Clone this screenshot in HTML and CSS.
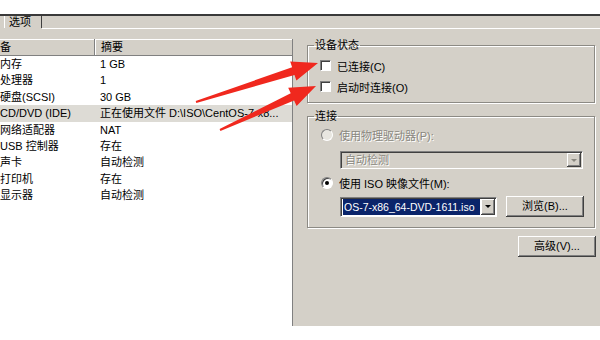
FILE: index.html
```html
<!DOCTYPE html>
<html>
  <head>
    <title>虚拟机设置 - CD/DVD</title>
    <link rel="stylesheet" href="styles.css">
  </head>
  <body>
    <div class="page">
      <div class="window">
        <div class="tabs">
          <div class="tab">选项</div>
          <div class="tab-rest"></div>
        </div>
        <div class="main">
          <div class="list">
            <div class="list-head">
              <div class="col1"><span class="shift">设备</span></div>
              <div class="col2">摘要</div>
            </div>
            <div class="row"><div class="col1">内存</div><div class="col2">1 GB</div></div>
            <div class="row"><div class="col1">处理器</div><div class="col2">1</div></div>
            <div class="row"><div class="col1">硬盘(SCSI)</div><div class="col2">30 GB</div></div>
            <div class="row selected"><div class="col1">CD/DVD (IDE)</div><div class="col2">正在使用文件 D:\ISO\CentOS-7-x8...</div></div>
            <div class="row"><div class="col1">网络适配器</div><div class="col2">NAT</div></div>
            <div class="row"><div class="col1">USB 控制器</div><div class="col2">存在</div></div>
            <div class="row"><div class="col1">声卡</div><div class="col2">自动检测</div></div>
            <div class="row"><div class="col1">打印机</div><div class="col2">存在</div></div>
            <div class="row"><div class="col1">显示器</div><div class="col2">自动检测</div></div>
          </div>

          <div class="side">
            <fieldset class="group status">
              <legend>设备状态</legend>
              <div class="opt"><span class="check"></span>已连接(C)</div>
              <div class="opt"><span class="check"></span>启动时连接(O)</div>
            </fieldset>

            <fieldset class="group connect">
              <legend>连接</legend>
              <div class="opt short disabled"><span class="radio off"></span>使用物理驱动器(P):</div>
              <div class="drop disabled-drop">
                <span class="drop-text">自动检测</span>
                <span class="drop-btn grey"></span>
              </div>
              <div class="opt short radio-two"><span class="radio on"></span>使用 ISO 映像文件(M):</div>
              <div class="file-row">
                <div class="drop combo">
                  <span class="drop-text sel">OS-7-x86_64-DVD-1611.iso</span>
                  <span class="drop-btn"></span>
                </div>
                <div class="btn browse">浏览(B)...</div>
              </div>
            </fieldset>

            <div class="btn adv">高级(V)...</div>
          </div>
        </div>
      </div>

      <svg class="arrows" width="600" height="340" viewBox="0 0 600 340">
        <polygon points="195.7,101 292.1,67.3 290.2,61.6 318,63 296.4,80.6 294.5,74.9 196.3,103" />
        <polygon points="219.6,129.1 290.7,93.2 288.2,87.7 316,86 296.6,105.9 294.1,100.4 220.4,130.9" />
      </svg>
    </div>
  </body>
</html>
```

FILE: styles.css
```css
body {
  margin: 0;
  background: #fff;
  font-family: "Liberation Sans", "Noto Sans CJK SC", sans-serif;
  font-size: 11px;
  color: #000;
}

.page { position: relative; width: 600px; height: 340px; padding-top: 14px; box-sizing: border-box; overflow: hidden; }

.window {
  height: 312px; box-sizing: border-box;
  background: #d4d0c8; border-top: 2px solid #3a3a3a;
  display: flex; flex-direction: column;
}

/* tab strip */
.tabs { display: flex; height: 13px; }
.tab {
  margin-left: 4px; width: 32px; padding-left: 4px; height: 12px; line-height: 12px;
  border-left: 1px solid #fff; border-right: 1px solid #404040;
}
.tab-rest { flex: 1; border-bottom: 1px solid #fff; }

.main { flex: 1; display: flex; padding-top: 10px; min-height: 0; }

/* device list */
.list {
  width: 292px; background: #fff; overflow: hidden;
  border-right: 1px solid #808080;
}
.list-head {
  display: flex; height: 16px; line-height: 16px;
  background: #d4d0c8; border-bottom: 1px solid #808080;
  box-shadow: inset 0 1px 0 #fff;
}
.list-head .col1 { border-right: 1px solid #808080; box-shadow: 1px 0 0 #fff; }
.shift { margin-left: -11px; }
.row { display: flex; height: 16.4px; line-height: 16.4px; }
.row.selected { background: #dddbd5; }
.col1 { width: 94px; white-space: nowrap; overflow: hidden; }
.col2 { flex: 1; padding-left: 6px; white-space: nowrap; overflow: hidden; }

/* right side */
.side { flex: 1; padding: 0 5px 0 14px; display: flex; flex-direction: column; }

.group {
  margin: 0; min-width: 0;
  padding: 4px 10px 5px 12px;
  border: 1px solid #8c8a84;
  box-shadow: inset 1px 1px 0 #fff, 1px 1px 0 #fff;
}
.group legend { margin-left: -6px; padding: 0 1px; line-height: 12px; }
.connect { margin-top: 7px; padding-bottom: 10px; }

.opt { display: flex; align-items: center; height: 21px; white-space: nowrap; }
.opt.short { height: 17px; }
.radio-two { margin-top: 5px; }
.disabled { color: #8a8880; text-shadow: 1px 1px 0 #fff; }

.check {
  width: 9px; height: 9px; margin-right: 6px; background: #fff;
  border: 1px solid; border-color: #808080 #fff #fff #808080;
  box-shadow: inset 1px 1px 0 #404040;
}

.radio {
  width: 10px; height: 10px; margin: 0 6px 0 1px; border-radius: 50%;
  border: 1px solid; border-color: #808080 #fff #fff #808080;
  position: relative;
}
.radio.off { background: #e8e6e0; }
.radio.on { background: #fff; box-shadow: inset 1px 1px 0 #404040; }
.radio.on::after {
  content: ""; position: absolute; left: 3px; top: 3px;
  width: 4px; height: 4px; border-radius: 50%; background: #000;
}

/* drop downs */
.drop {
  display: flex; height: 18px; box-sizing: border-box;
  border: 1px solid; border-color: #808080 #fff #fff #808080;
  box-shadow: inset 1px 1px 0 #404040;
  padding: 1px 1px 1px 2px;
}
.disabled-drop { margin: 8px 0 0 20px; width: 243px; background: #d4d0c8; }
.drop-text { flex: 1; padding-left: 2px; line-height: 14px; white-space: nowrap; overflow: hidden; }
.disabled-drop .drop-text { color: #8a8880; text-shadow: 1px 1px 0 #fff; }
.drop-btn {
  width: 14px; position: relative; background: #d4d0c8;
  box-shadow: inset -1px -1px 0 #404040, inset 1px 1px 0 #fff, inset -2px -2px 0 #808080;
}
.drop-btn::after {
  content: ""; position: absolute; left: 4px; top: 6px;
  border-left: 3px solid transparent; border-right: 3px solid transparent;
  border-top: 3px solid #000;
}
.drop-btn.grey::after { border-top-color: #8a8880; }

.file-row { display: flex; align-items: flex-start; margin: 5px 0 0 20px; }
.combo { width: 157px; height: 20px; margin-top: 1px; background: #fff; }
.combo .drop-text { line-height: 16px; font-size: 10.5px; }
.sel { background: #0a246a; color: #fff; padding-left: 1px; margin-right: 1px; }

.btn {
  width: 78px; height: 21px; line-height: 21px; text-align: center;
  background: #d4d0c8; box-sizing: border-box;
  box-shadow: inset -1px -1px 0 #404040, inset 1px 1px 0 #fff, inset -2px -2px 0 #808080;
}
.browse { margin-left: 9px; }
.adv { align-self: flex-end; margin: 8px -1px 0 0; }

.arrows { position: absolute; left: 0; top: 0; pointer-events: none; }
.arrows polygon { fill: #f0281e; }
```
